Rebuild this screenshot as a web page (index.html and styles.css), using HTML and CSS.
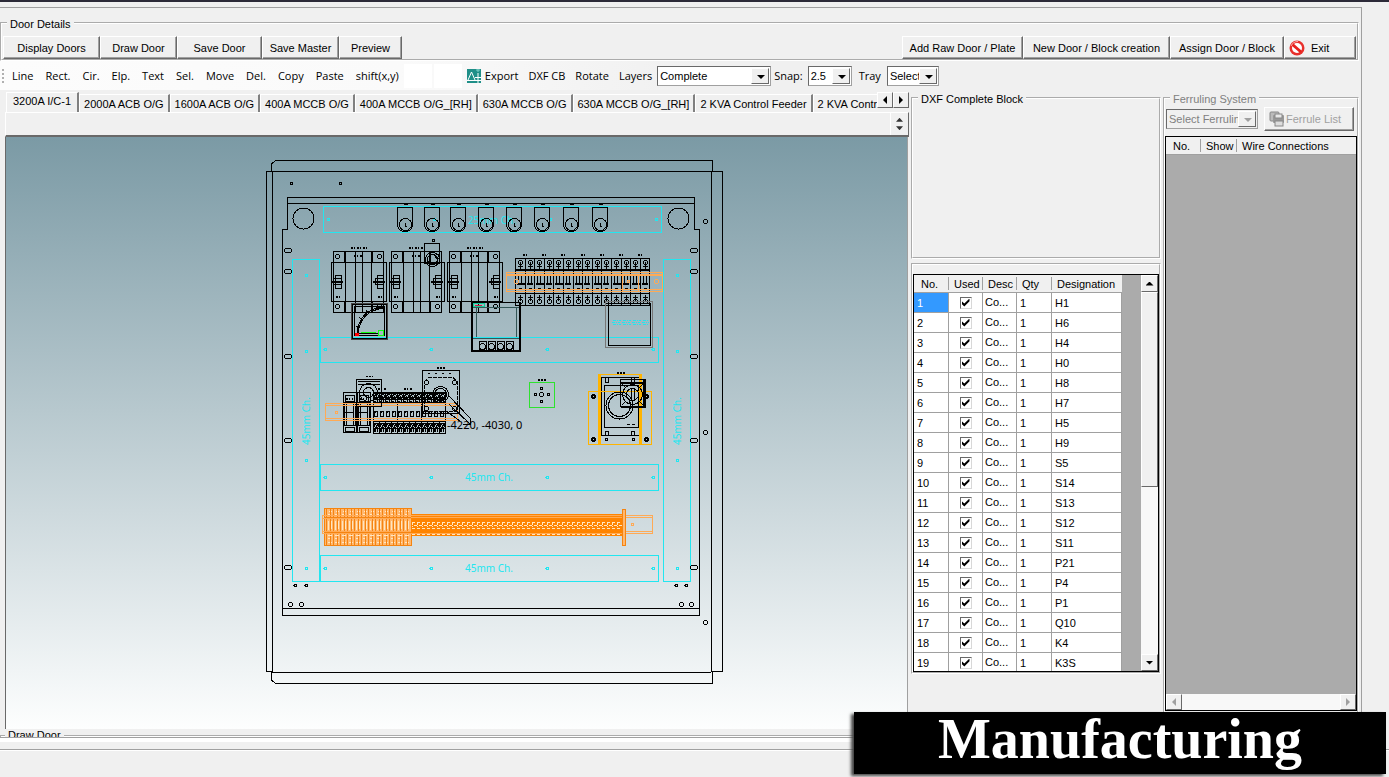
FILE: index.html
```html
<!DOCTYPE html>
<html lang="en">
<head>
  <meta charset="utf-8">
  <meta name="viewport" content="width=device-width">
  <title>Door Details</title>
  <link rel="stylesheet" href="styles.css">
</head>
<body>
  <main class="window">
    <fieldset class="group door-details">
      <legend>Door Details</legend>
      <div class="buttons">
        <button class="btn w-display">Display Doors</button>
        <button class="btn w-draw">Draw Door</button>
        <button class="btn w-save">Save Door</button>
        <button class="btn w-draw">Save Master</button>
        <button class="btn w-preview">Preview</button>
        <button class="btn w-raw push">Add Raw Door / Plate</button>
        <button class="btn w-new">New Door / Block creation</button>
        <button class="btn w-assign">Assign Door / Block</button>
        <button class="btn w-exit">
          <svg width="16" height="16" viewBox="0 0 16 16">
            <circle cx="8" cy="8" r="7.5" fill="#e8302c"/>
            <circle cx="8" cy="8" r="5" fill="#fff"/>
            <path d="M3.500 4.500 L12 12" stroke="#e8201c" stroke-width="3"/>
            <path d="M2 6 Q4 1.500 9 1.500" stroke="#faa" fill="none"/>
          </svg>
          Exit
        </button>
      </div>
    </fieldset>

    <div class="toolbar">
      <span class="grip"></span>
      <div class="draw-tools">
        <button class="tool">Line</button>
        <button class="tool">Rect.</button>
        <button class="tool">Cir.</button>
        <button class="tool">Elp.</button>
        <button class="tool">Text</button>
        <button class="tool">Sel.</button>
        <button class="tool">Move</button>
        <button class="tool">Del.</button>
        <button class="tool">Copy</button>
        <button class="tool">Paste</button>
        <button class="tool">shift(x,y)</button>
      </div>
      <span class="blanks"><i></i><i></i></span>
      <button class="tool export">
        <svg width="14" height="14" viewBox="0 0 14 14">
          <rect width="14" height="14" fill="#1f8f88"/>
          <path d="M1 11 L4.500 3 L8 11 M0 11.500 H14 M11 4 V14 M8 8.500 H14" fill="none" stroke="#fff"/>
          <path d="M9 1 H13 M11 0 V3" stroke="#7fd0c8"/>
        </svg>
        Export
      </button>
      <button class="tool">DXF CB</button>
      <button class="tool">Rotate</button>
      <label class="tool" for="layers">Layers</label>
      <span class="combo layers"><select id="layers"><option>Complete</option></select></span>
      <label class="snap-label" for="snap">Snap:</label>
      <span class="combo snap"><select id="snap"><option>2.5</option></select></span>
      <label class="tray-label" for="tray">Tray</label>
      <span class="combo tray"><select id="tray"><option>Select</option></select></span>
    </div>

    <div class="work">
      <section class="editor">
        <div class="tabs">
          <div class="tab-list">
            <button class="tab active">3200A I/C-1</button>
            <button class="tab">2000A ACB O/G</button>
            <button class="tab">1600A ACB O/G</button>
            <button class="tab">400A MCCB O/G</button>
            <button class="tab">400A MCCB O/G_[RH]</button>
            <button class="tab">630A MCCB O/G</button>
            <button class="tab">630A MCCB O/G_[RH]</button>
            <button class="tab">2 KVA Control Feeder</button>
            <button class="tab">2 KVA Control</button>
          </div>
          <button class="arrow-btn left" aria-label="Previous tabs"></button>
          <button class="arrow-btn right" aria-label="Next tabs"></button>
        </div>
        <div class="tab-page">
          <div class="spin"><i class="up"></i><i class="down"></i></div>
        </div>
        <div class="canvas">
          <svg id="drawing" viewBox="6 137 901 592" shape-rendering="crispEdges">
            <!-- enclosure -->
            <g class="k">
              <path d="M271.500 171V164L275.500 160.500H712.500V171"/>
              <path d="M266.500 671.500V171.500H722.500V671.500H711.500V171.500M272.500 171.500V671.500H266.500"/>
              <path d="M272 672.500H711M271.500 671V680L275.500 683.500H712.500V671"/>
              <path d="M287.500 197.500H694.500V229.500H699.500V615.500H282.500V229.500H287.500ZM287.500 203.500H694.500M282.500 608.500H699.500"/>
              <circle cx="303.500" cy="218.500" r="10.500"/>
              <circle cx="678.500" cy="218.500" r="10.500"/>
            </g>
            <!-- cable channels -->
            <g class="c">
              <rect x="323.500" y="206.500" width="338" height="26"/>
              <rect x="292.500" y="259.500" width="27" height="322"/>
              <rect x="663.500" y="259.500" width="27" height="322"/>
              <rect x="320.500" y="337.500" width="338" height="25"/>
              <rect x="320.500" y="464.500" width="338" height="26"/>
              <rect x="320.500" y="555.500" width="338" height="26"/>
            </g>
            <g class="ch">
              <text x="468" y="224">25mm Ch.</text>
              <text x="465" y="481">45mm Ch.</text>
              <text x="465" y="572">45mm Ch.</text>
              <text transform="translate(310 445) rotate(-90)">45mm Ch.</text>
              <text transform="translate(681 445) rotate(-90)">45mm Ch.</text>
            </g>
            <g id="parts"></g>
            <!-- meter -->
            <g class="k">
              <rect x="351.500" y="303.500" width="36" height="36" stroke="#444"/>
              <rect x="352.500" y="304.500" width="34" height="34"/>
              <rect x="354.500" y="306.500" width="30" height="29"/>
              <path d="M357 334Q359 309 384 307M358 334Q360 311 384 308M359 328L356 326M362 320L359 317M368 313L366 310M376 309V306M355 333.500H378"/>
              <path d="M361 332.500H376" stroke="#1f1"/>
              <circle cx="381" cy="333" r="3" stroke="#1f1"/>
              <rect x="355" y="333" width="4" height="3" fill="#f00" stroke="none"/>
            </g>
            <!-- relay -->
            <g class="k">
              <rect x="471.500" y="302.500" width="49" height="49"/>
              <path d="M472.500 303V351M519.500 303V351"/>
              <path d="M476.500 308V337M516.500 308V337M473 307.500H519" stroke="#355"/>
              <path d="M472 351H520" stroke-width="2"/>
              <rect x="473.500" y="303.500" width="11" height="3" stroke="#1c9"/>
              <path d="M475 305.500H482" stroke="#c24"/>
              <path d="M473 338.500H519" stroke="#355"/>
            </g>
            <!-- square unit -->
            <rect x="605.500" y="301.500" width="47" height="46" fill="none" stroke="#777"/>
            <rect class="k" x="608.500" y="303.500" width="42" height="42"/>
            <path d="M612 322.500H649M613 320.500H649M613 324.500H649" class="c" stroke-dasharray="3 1 1 1 2 2"/>
            <!-- mode selector -->
            <g class="k">
              <rect x="422.500" y="370.500" width="37" height="43"/>
              <path d="M424.500 381.500L429 377.500H453L457.500 382V411H424.500Z" stroke-dasharray="4 1"/>
              <circle cx="440.500" cy="394.500" r="8"/>
              <circle cx="440.500" cy="394.500" r="6"/>
              <circle cx="426.500" cy="382.500" r="2"/><circle cx="454.500" cy="382.500" r="2"/>
              <circle cx="426.500" cy="408.500" r="2"/><circle cx="454.500" cy="408.500" r="2"/>
              <path d="M428 373.500H452" stroke-dasharray="2 5"/>
              <path d="M437 367.500H445" stroke-width="2" stroke-dasharray="2 1"/>
              <rect x="356.500" y="379.500" width="25" height="27"/>
              <path d="M358 381.500H380M358 384.500H380"/>
              <circle cx="368.500" cy="392.500" r="9"/><circle cx="368.500" cy="392.500" r="5"/>
              <path d="M366 376.500H373" stroke-dasharray="2 1"/>
              <path d="M449 396L470 418V424M449 404L470 424H463M446 411L460 421"/>
            </g>
            <text class="coord" x="447" y="429">-4220, -4030, 0</text>
            <!-- pushbutton -->
            <rect x="529.500" y="382.500" width="25" height="25" fill="none" stroke="#2ee22e"/>
            <path class="k" d="M538 379.500H546" stroke-width="2" stroke-dasharray="2 1"/>
            <!-- rotary switch -->
            <g class="k">
              <rect x="601.500" y="377.500" width="39" height="58"/>
              <rect x="604.500" y="385.500" width="34" height="42"/>
              <circle cx="619.500" cy="405.500" r="13.500"/>
              <circle cx="619.500" cy="405.500" r="11"/>
              <path d="M605.500 378V382H608.500V378M631.500 378V382H634.500V378M605.500 435V431H608.500V435M631.500 435V431H634.500V435"/>
              <path d="M617 372.500H626" stroke-width="2" stroke-dasharray="2 1"/>
              <path d="M627 424.500H635" stroke-dasharray="3 2"/>
            </g>
            <g fill="none" stroke="#ffb400">
              <rect x="588.500" y="391.500" width="63" height="53"/>
              <rect x="598.500" y="374.500" width="43" height="70"/>
              <path d="M600 375V444M640 375V444" stroke-width="2"/>
            </g>
            <g class="k">
              <rect x="620.500" y="379.500" width="25" height="27"/>
              <path d="M621 382.500H645M644 380V407M621 407H646" stroke-width="2"/>
              <circle cx="632.500" cy="394.500" r="10"/><circle cx="632.500" cy="394.500" r="6"/>
              <rect x="631.500" y="388.500" width="3" height="12"/>
              <path d="M622 384L626 388M643 384L639 388M622 405L626 401M643 405L639 401"/>
            </g>
          </svg>
        </div>
      </section>

      <section class="blocks">
        <fieldset class="group dxf">
          <legend>DXF Complete Block</legend>
        </fieldset>
        <div class="group used">
          <div class="grid-box">
            <table class="grid">
              <thead>
                <tr><th class="c-no">No.</th><th class="c-used">Used</th><th class="c-desc">Desc</th><th class="c-qty">Qty</th><th class="c-des">Designation</th></tr>
              </thead>
              <tbody id="rows"></tbody>
            </table>
            <div class="vscroll">
              <button class="arrow-btn up" aria-label="Scroll up"></button>
              <div class="thumb"></div>
              <button class="arrow-btn down" aria-label="Scroll down"></button>
            </div>
          </div>
        </div>
      </section>

      <fieldset class="group ferruling">
        <legend>Ferruling System</legend>
        <div class="ferrule-bar">
          <span class="combo ferrule"><select aria-label="Ferruling" disabled><option>Select Ferruling</option></select></span>
          <button class="btn w-ferrule" disabled>
            <svg width="16" height="16" viewBox="0 0 16 16">
              <rect x="1" y="1" width="9" height="9" rx="1" fill="#bbb" stroke="#888"/>
              <rect x="4" y="4" width="11" height="8" rx="1" fill="#999"/>
              <rect x="6" y="3" width="7" height="4" fill="#e8e8e8" stroke="#888"/>
              <rect x="6" y="10" width="8" height="5" fill="#ddd" stroke="#888"/>
            </svg>
            Ferrule List
          </button>
        </div>
        <div class="wire-box">
          <table class="grid">
            <thead><tr><th class="c-no">No.</th><th class="c-show">Show</th><th class="c-wire">Wire Connections</th></tr></thead>
          </table>
          <div class="hscroll">
            <button class="arrow-btn left" disabled aria-label="Scroll left"></button>
            <button class="arrow-btn right" disabled aria-label="Scroll right"></button>
          </div>
        </div>
      </fieldset>
    </div>

    <div class="next-group">
      <fieldset class="group">
        <legend>Draw Door</legend>
      </fieldset>
    </div>
    <div class="edge"></div>
  </main>
  <div class="base"></div>
  <h1 class="banner">Manufacturing</h1>

  <script>
    var designations = ['H1', 'H6', 'H4', 'H0', 'H8', 'H7', 'H5', 'H9', 'S5', 'S14', 'S13', 'S12',
      'S11', 'P21', 'P4', 'P1', 'Q10', 'K4', 'K3S'];
    var html = '';
    for (var i = 0; i < designations.length; i++) {
      html += '<tr><td' + (i === 0 ? ' class="selected"' : '') + '>' + (i + 1) + '</td>' +
        '<td class="check"><input type="checkbox" checked aria-label="Used ' + designations[i] + '"></td>' +
        '<td class="desc">Co...</td><td>1</td><td>' + designations[i] + '</td></tr>';
    }
    document.getElementById('rows').innerHTML = html;

    var out = '';

    function rect(x, y, w, h, cls) {
      out += '<rect class="' + (cls || 'k') + '" x="' + (x + 0.5) + '" y="' + (y + 0.5) + '" width="' + w + '" height="' + h + '"/>';
    }
    function circle(x, y, r, cls) {
      out += '<circle class="' + (cls || 'k') + '" cx="' + (x + 0.5) + '" cy="' + (y + 0.5) + '" r="' + r + '"/>';
    }
    function path(d, cls) {
      out += '<path class="' + (cls || 'k') + '" d="' + d + '"/>';
    }

    // fixing holes
    [[291, 183], [340, 183]].forEach(function(p) { circle(p[0], p[1], 1); });
    [[705, 221], [705, 432], [705, 622], [290, 604], [301, 604], [681, 604], [691, 604]].forEach(function(p) { circle(p[0], p[1], 2); });
    [[295, 585], [306, 585], [676, 585], [686, 585]].forEach(function(p) { circle(p[0], p[1], 1.5); });
    [250, 271, 356, 440, 567].forEach(function(y) {
      out += '<rect class="k" x="284.500" y="' + (y - 1.5) + '" width="7" height="4" rx="2"/>';
      out += '<rect class="k" x="690.500" y="' + (y - 1.5) + '" width="7" height="4" rx="2"/>';
    });
    [349, 477, 568].forEach(function(y) {
      [325, 431, 547, 653].forEach(function(x) { circle(x, y, 1.5, 'c'); });
    });
    [[328, 219], [434, 219], [550, 219], [656, 219], [306, 275], [677, 275], [306, 351], [677, 351], [306, 460], [677, 460], [306, 568], [677, 568]].forEach(function(p) {
      circle(p[0], p[1], 1, 'c');
    });

    // lamps
    [405, 432, 458, 486, 514, 542, 571, 600].forEach(function(x) {
      path('M' + (x - 7.5) + ' 225V207.500H' + (x + 7.5) + 'V225Q' + (x + 7) + ' 231.500 ' + x + ' 231.500Q' + (x - 7) + ' 231.500 ' + (x - 7.5) + ' 225');
      circle(x, 224, 6);
      path('M' + (x + 0.5) + ' 223V226H' + (x + 2) + 'M' + (x - 1) + ' 204.500H' + (x + 3));
    });

    // contactors
    [331, 389, 447].forEach(function(x) {
      rect(x, 262, 55, 39);
      rect(x + 2, 251, 50, 61);
      [14, 24, 31, 40].forEach(function(dx) { path('M' + (x + dx + 0.5) + ' 252V312'); });
      path('M' + (x + 13.5) + ' 252V262M' + (x + 41.5) + ' 252V262M' + (x + 13.5) + ' 302V312M' + (x + 41.5) + ' 302V312');
      [6, 48].forEach(function(dx) {
        circle(x + dx, 256, 2);
        circle(x + dx, 306, 2);
        rect(x + dx - 4, 278, 8, 6);
        rect(x + dx - 2, 275, 6, 13);
        path('M' + (x + dx - 6) + ' 281.500H' + (x + dx + 6), 'k thick');
        path('M' + (x + dx - 1) + ' 296.500H' + (x + dx + 5), 'k dots');
      });
      path('M' + (x + 20) + ' 247.500H' + (x + 36), 'k dots');
      path('M' + (x + 23) + ' 255.500H' + (x + 31), 'k dots');
    });
    rect(424, 243, 15, 20);
    circle(432, 259, 7);
    circle(432, 259, 5);
    circle(433, 240, 1);

    // relay terminals
    [482, 491, 500, 509].forEach(function(x) {
      rect(x - 3, 341, 7, 9);
      circle(x, 346, 3);
    });

    // breaker row, 14 poles
    rect(515, 258, 134, 47);
    path('M515 270.500H650M515 293.500H650M515 269.500H650');
    for (i = 0; i < 14; i++) {
      var x = 515 + Math.round(i * 9.6);
      path('M' + (x + 0.5) + ' 258V305');
      circle(x + 5, 262, 2);
      path('M' + (x + 3) + ' 266.500H' + (x + 8) + 'M' + (x + 5.5) + ' 262V269');
      path('M' + (x + 3.5) + ' 276V284M' + (x + 6.5) + ' 276V284');
      path('M' + (x + 2) + ' 284H' + (x + (i % 2 ? 8 : 10)), 'k thick');
      circle(x + 5, 301, 2);
      path('M' + (x + 3) + ' 297.500H' + (x + 8) + 'M' + (x + 5.5) + ' 295V301');
      path('M' + (x + 4) + ' 288.500H' + (x + 7));
      if (i % 2 === 0) path('M' + (x + 8) + ' 254.500H' + (x + 14), 'k dots');
    }
    rect(506, 272, 156, 19, 'o');
    path('M507 274.500H662M507 275.500H662M507 289.500H662', 'o');
    rect(622, 274, 16, 17, 'o');
    circle(516, 281, 2, 'o');
    circle(656, 281, 2, 'o');
    circle(628, 281, 1, 'o');

    // terminal relays on the lower rail
    [343, 357].forEach(function(x) {
      rect(x, 392, 13, 40);
      rect(x + 2, 395, 9, 6);
      rect(x + 2, 427, 9, 4);
      path('M' + (x + 1) + ' 404V426M' + (x + 13) + ' 404V426', 'k thick');
      path('M' + (x + 3.5) + ' 404V426M' + (x + 10.5) + ' 404V426');
      path('M' + (x + 2) + ' 412.500H' + (x + 11) + 'M' + x + ' 402.500H' + (x + 13) + 'M' + x + ' 425.500H' + (x + 13));
      path('M' + (x + 3) + ' 398.500H' + (x + 10), 'k dots');
    });
    rect(373, 392, 72, 41);
    path('M373 393.500H446M373 399.500H446M373 402.500H446M373 421.500H446M373 428.500H446');
    for (i = 0; i < 12; i++) {
      x = 373 + i * 6;
      path('M' + (x + 0.5) + ' 392V403M' + (x + 0.5) + ' 421V433');
      circle(x + 3, 396, 2);
      circle(x + 3, 425, 2);
      rect(x + 1, 411, 3, 5);
      path('M' + (x + 1) + ' 431L' + (x + 6) + ' 423M' + (x + 2) + ' 394L' + (x + 5) + ' 401M' + (x + 2) + ' 423L' + (x + 5) + ' 430');
      if (i % 4 === 0) path('M' + (x + 0.5) + ' 392V433');
    }
    path('M374 397.500H445M374 401.500H445M374 423.500H445M374 430.500H445M374 411.500H445M378 388.500H386M404 388.500H412', 'k dots');
    rect(374, 448, 1, 0);
    rect(325, 403, 132, 17, 'o');
    path('M325 405.500H458M325 418.500H458', 'o');
    circle(336, 412, 1, 'o');

    // pushbutton contacts
    circle(541, 394, 2);
    [[535, 394], [548, 394], [541, 388], [541, 401]].forEach(function(p) { circle(p[0], p[1], 1); });
    [[593, 396], [646, 396], [593, 439], [646, 439]].forEach(function(p) { circle(p[0], p[1], 2); circle(p[0], p[1], 1); });
    circle(606, 439, 1);
    circle(633, 439, 1);

    // terminal strip
    rect(324, 508, 87, 37, 'f');
    for (i = 0; i < 12; i++) {
      x = 325 + i * 7;
      path('M' + (x + 4) + ' 511.500H' + (x + 7) + 'M' + (x + 3) + ' 514.500H' + (x + 6) +
        'M' + (x + 3.5) + ' 521V530M' + (x + 6.5) + ' 521V529M' + (x + 3) + ' 538.500H' + (x + 6) +
        'M' + (x + 3) + ' 542.500H' + (x + 7), 'l');
      path('M' + (x + 1.5) + ' 509V545M' + (x + 5.5) + ' 509V545', 'f');
      path('M' + (x + 3) + ' 518.500H' + (x + 7) + 'M' + (x + 3) + ' 535.500H' + (x + 7), 'l');
    }
    path('M324 517.500H411M324 532.500H411M324 515.500H411', 'f');
    out += '<rect x="411" y="514" width="213" height="22" fill="#ff8400"/>';
    path('M411 517.500H623M411 533.500H623', 'o');
    out += '<path class="l" stroke-dasharray="3 2" d="M412 522.500H622M412 528.500H622M414 525.500H622M412 534.500H622"/>';
    out += '<path class="l" stroke-dasharray="1 4" d="M412 523.500H622M412 526.500H622M412 524.500H622"/>';
    rect(322, 515, 330, 18, 'o');
    path('M322 518.500H411M322 531.500H411M626 517.500H652M626 531.500H652', 'o');
    rect(622, 509, 3, 36, 'f');
    circle(632, 524, 1, 'o');

    document.getElementById('parts').innerHTML = out;
  </script>
</body>
</html>
```
FILE: styles.css
```css
* {
  box-sizing: border-box;
}

body {
  margin: 0;
  min-height: 100vh;
  border-top: 2px solid #2c2a38;
  background: #f0f0f0;
  color: #000;
  font: 11px/14px "Liberation Sans", Arial, sans-serif;
  position: relative;
}

button, select, input {
  margin: 0;
  padding: 0;
  font: inherit;
  color: inherit;
}

.window {
  margin: 5px 27px 0 0;
  border-top: 1px solid #a0a0a0;
  border-right: 1px solid #a0a0a0;
}

.group {
  min-width: 0;
  margin: 0;
  padding: 0;
  border: 2px groove #fff;
}

.group legend {
  margin-left: 5px;
  padding: 3px 3px 0;
  line-height: 13px;
}

.door-details {
  margin: 7px 2px 0 0;
  padding-top: 5px;
}

.buttons {
  display: flex;
  padding: 0 1px;
}

.btn {
  height: 23px;
  background: #f0f0f0;
  border: 1px solid;
  border-color: #fff #696969 #696969 #fff;
  box-shadow: inset -1px -1px #a0a0a0;
  white-space: nowrap;
}

.btn:disabled {
  color: #a0a0a0;
}

.btn svg, .tool svg {
  flex: none;
}

.push {
  margin-left: auto;
}

.w-display { width: 97px; }
.w-draw { width: 77px; }
.w-save { width: 85px; }
.w-preview { width: 63px; }
.w-raw { width: 121px; }
.w-new { width: 147px; }
.w-assign { width: 114px; }

.w-exit {
  display: flex;
  align-items: center;
  gap: 6px;
  width: 72px;
  padding-left: 4px;
}

.w-ferrule {
  display: flex;
  align-items: center;
  gap: 1px;
  width: 90px;
  height: 24px;
  padding-left: 4px;
}

.toolbar {
  display: flex;
  align-items: center;
  height: 29px;
  background: linear-gradient(90deg, #fcfcfc 0, #fafafa 400px, #f0f0f0 700px);
  font-family: "Open Sans", "Noto Sans", sans-serif;
}

.draw-tools {
  display: flex;
  gap: 2px;
}

.grip {
  width: 2px;
  height: 14px;
  margin: 0 3px 0 2px;
  background: repeating-linear-gradient(#b0b0b0 0 2px, transparent 2px 4px);
}

.tool {
  display: flex;
  align-items: center;
  gap: 4px;
  padding: 0 5px;
  border: 0;
  background: none;
  white-space: nowrap;
}

.blanks {
  display: flex;
  gap: 2px;
}

.blanks i {
  width: 28px;
  height: 24px;
  background: #fff;
}

.combo {
  position: relative;
  display: block;
  height: 20px;
  background: #fff;
  border: 1px solid;
  border-color: #696969 #a0a0a0 #a0a0a0 #696969;
  font-family: "Liberation Sans", Arial, sans-serif;
}

.combo select {
  width: 100%;
  height: 18px;
  padding: 0 16px 0 2px;
  border: 0;
  background: none;
  appearance: none;
}

.combo::before {
  content: "";
  position: absolute;
  top: 1px;
  right: 1px;
  bottom: 1px;
  width: 16px;
  background: #f0f0f0;
  border: 1px solid;
  border-color: #fff #696969 #696969 #fff;
  pointer-events: none;
}

.combo::after {
  content: "";
  position: absolute;
  top: 8px;
  right: 5px;
  border: 4px solid transparent;
  border-top-color: #000;
  border-bottom: 0;
  pointer-events: none;
}

.layers { width: 114px; }
.snap { width: 44px; }
.tray { width: 52px; }
.ferrule { width: 92px; }

.ferrule select {
  color: #808080;
  opacity: 1;
}

.ferrule {
  background: #f0f0f0;
}

.ferrule::after {
  border-top-color: #a0a0a0;
}

.snap-label { margin: 0 5px 0 3px; }
.tray-label { margin: 0 6px 0 7px; }

.work {
  display: grid;
  grid-template-columns: minmax(0, 1fr) 250px 196px;
  gap: 2px;
  padding-right: 2px;
}

.editor {
  padding-top: 2px;
}

.tabs {
  display: flex;
  align-items: flex-start;
  height: 20px;
  padding-left: 6px;
}

.tab-list {
  display: flex;
  flex: 1;
  align-items: flex-end;
  min-width: 0;
  height: 20px;
  overflow: hidden;
}

.tab {
  flex: none;
  height: 18px;
  padding: 0 4px;
  border: 0;
  border-left: 1px solid #fff;
  border-top: 1px solid #fff;
  border-right: 2px solid #808080;
  background: #f0f0f0;
  white-space: nowrap;
}

.tab.active {
  height: 20px;
  padding: 0 6px 3px;
}

.tab:last-child {
  border-right: 0;
  padding-right: 0;
}

.arrow-btn {
  position: relative;
  flex: none;
  width: 16px;
  height: 16px;
  background: #f0f0f0;
  border: 1px solid;
  border-color: #fff #696969 #696969 #fff;
}

.arrow-btn::after {
  content: "";
  position: absolute;
  inset: 0;
  margin: auto;
  width: 8px;
  height: 4px;
  background: #000;
  clip-path: polygon(0 0, 100% 0, 50% 100%);
}

.arrow-btn.up::after {
  clip-path: polygon(0 100%, 100% 100%, 50% 0);
}

.arrow-btn.left::after, .arrow-btn.right::after {
  width: 4px;
  height: 8px;
}

.arrow-btn.left::after { clip-path: polygon(100% 0, 100% 100%, 0 50%); }
.arrow-btn.right::after { clip-path: polygon(0 0, 100% 50%, 0 100%); }

.arrow-btn:disabled::after {
  background: #a0a0a0;
}

.tab-page {
  display: flex;
  justify-content: flex-end;
  height: 25px;
  margin-left: 5px;
  border: 1px solid;
  border-color: #fff #696969 #696969 #fff;
  border-bottom-width: 2px;
}

.spin {
  display: flex;
  flex-direction: column;
  align-items: center;
  justify-content: space-evenly;
  width: 18px;
  border-left: 1px solid #fff;
}

.spin i {
  width: 7px;
  height: 4px;
  background: #333;
  clip-path: polygon(0 0, 100% 0, 50% 100%);
}

.spin .up {
  clip-path: polygon(0 100%, 100% 100%, 50% 0);
}

.canvas {
  margin: 0 1px 0 5px;
  border-left: 1px solid #696969;
  border-right: 1px solid #a0a0a0;
  background: linear-gradient(#7b9aa5, #fdfefe);
}

.canvas svg {
  display: block;
  width: 100%;
}

.k, .c, .o, .f, .l { fill: none; }
.k { stroke: #000; }
.c { stroke: #22e6f0; }
.o { stroke: #ffaa55; }
.f { stroke: #f58410; }
.l { stroke: #ffe6c0; }
.thick { stroke-width: 2; }
.dots { stroke-width: 2; stroke-dasharray: 2 1 1 2; }
rect.f { fill: #ffb870; }

.ch {
  fill: #22e6f0;
  font: 10px "Noto Sans", sans-serif;
}

.coord {
  font: 11px "Noto Sans", sans-serif;
}

.dxf {
  height: 169px;
}

.used {
  margin-top: 4px;
  padding-top: 9px;
}

.grid-box {
  display: flex;
  height: 398px;
  overflow: hidden;
  border: 1px solid #000;
  background: #ababab;
}

.grid {
  border-collapse: separate;
  border-spacing: 0;
  table-layout: fixed;
  align-self: flex-start;
}

.grid th {
  height: 18px;
  padding: 0 0 0 5px;
  background: linear-gradient(#a0a0a0, #a0a0a0) right center / 1px 13px no-repeat #f0f0f0;
  border-bottom: 1px solid #a0a0a0;
  font-weight: normal;
  text-align: left;
  white-space: nowrap;
}

.grid th:last-child {
  background: #f0f0f0;
}

.grid td {
  height: 20px;
  padding: 0 0 0 3px;
  background: #fff;
  border-right: 1px solid #a0a0a0;
  border-bottom: 1px solid #a0a0a0;
}

.grid .selected {
  background: #3399ff;
  color: #fff;
}

.grid .desc {
  padding: 0 0 2px 2px;
}

.grid .check {
  padding: 0;
  text-align: center;
}

.check input {
  display: block;
  width: 12px;
  height: 12px;
  margin: 0 auto;
  appearance: none;
  background: #fff;
  border: 1px solid;
  border-color: #696969 #d8d8d8 #d8d8d8 #696969;
}

.check input:checked::before {
  content: "";
  display: block;
  width: 8px;
  height: 8px;
  margin: 1px;
  background: #000;
  clip-path: polygon(0 30%, 35% 62%, 100% 0, 100% 35%, 35% 100%, 0 65%);
}

.grid .c-no { width: 35px; padding-left: 7px; }
.c-used { width: 34px; }
.c-desc { width: 34px; }
.c-qty { width: 35px; }
.grid .c-des { width: 70px; }
.c-show { width: 36px; }
.grid .c-wire { width: 119px; }

.vscroll {
  display: flex;
  flex-direction: column;
  width: 17px;
  margin-left: auto;
  background: #f8f8f8;
}

.vscroll .arrow-btn {
  width: 17px;
  height: 17px;
}

.vscroll .down {
  margin-top: auto;
}

.thumb {
  height: 195px;
  background: #f0f0f0;
  border: 1px solid;
  border-color: #fff #696969 #696969 #fff;
}

.ferruling {
  display: flex;
  flex-direction: column;
}

.ferruling legend {
  color: #808080;
}

.ferrule-bar {
  display: flex;
  align-items: center;
  justify-content: space-between;
  padding: 1px 3px 0 1px;
}

.wire-box {
  display: flex;
  flex-direction: column;
  height: 575px;
  margin-top: 5px;
  border: 1px solid #000;
  background: #ababab;
}

.wire-box .grid {
  width: 100%;
}

.hscroll {
  display: flex;
  justify-content: space-between;
  margin-top: auto;
  background: #f8f8f8;
}

.next-group {
  height: 9px;
  margin-right: 2px;
  overflow: hidden;
  border-bottom: 1px solid #a0a0a0;
}

.next-group legend {
  margin-left: 3px;
  padding-top: 0;
}

.edge {
  height: 4px;
  background: #fff;
}

.base {
  margin-top: 7px;
  border-top: 1px solid #a0a0a0;
  border-bottom: 1px solid #fff;
}

.banner {
  position: absolute;
  right: 3px;
  bottom: 3px;
  width: 532px;
  height: 62px;
  margin: 0;
  background: #000;
  box-shadow: -3px 2px 3px #444;
  color: #fff;
  font: bold 56px/54px "Liberation Serif", "Times New Roman", serif;
  text-align: center;
}
```
